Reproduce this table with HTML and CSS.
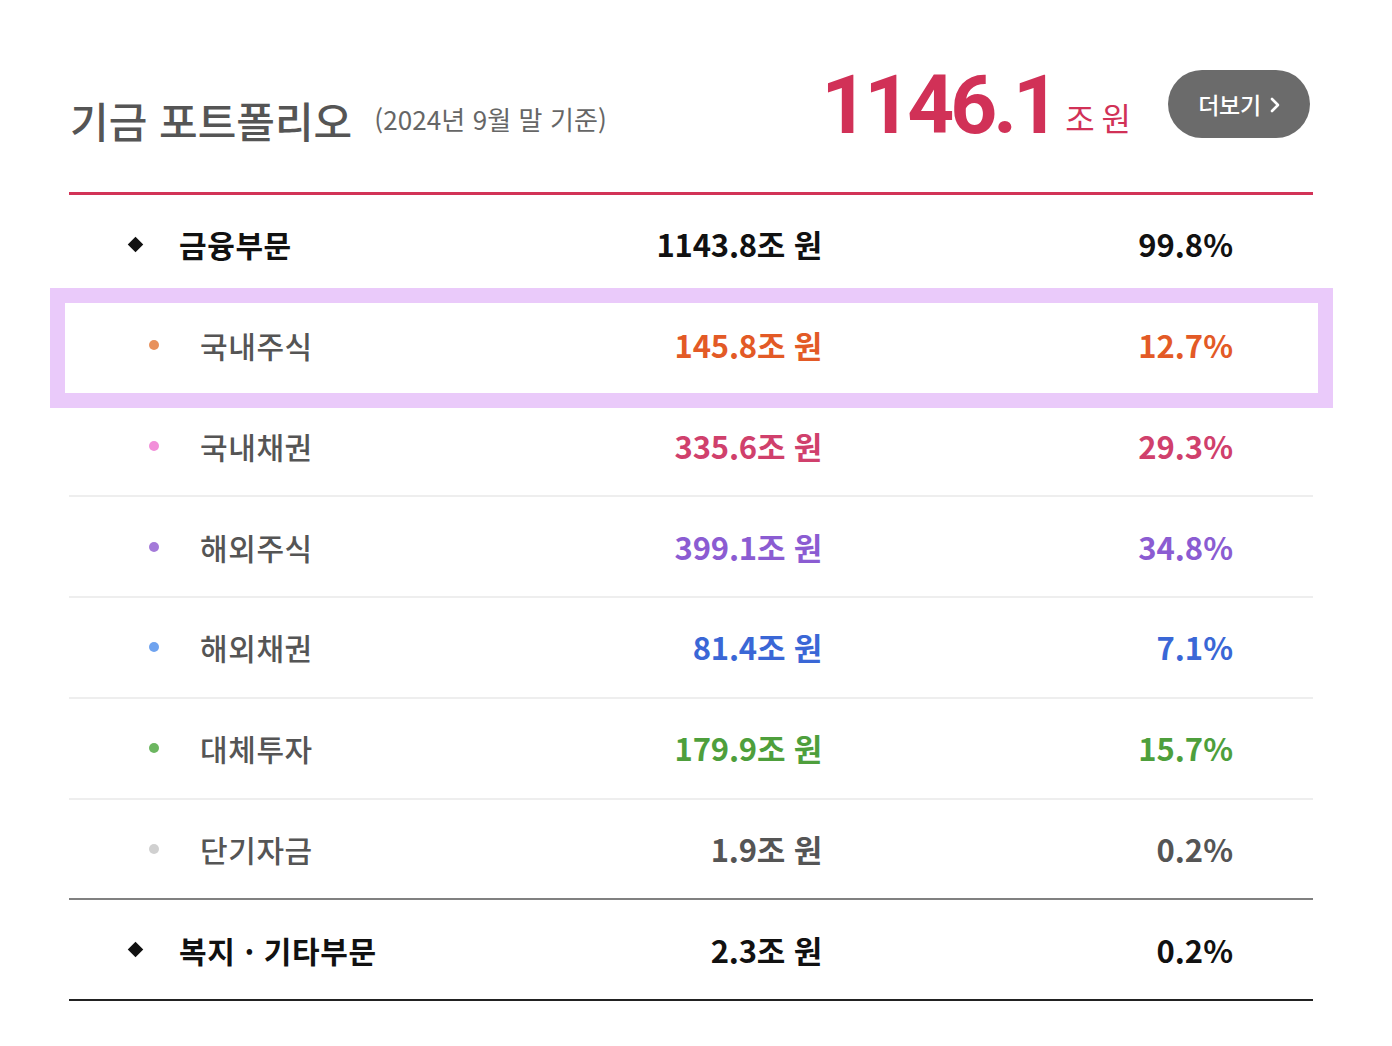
FILE: index.html
```html
<!DOCTYPE html>
<html lang="ko">
<head>
<meta charset="utf-8">
<title>기금 포트폴리오</title>
<link rel="stylesheet" href="styles.css">
</head>
<body>
<div class="page">
  <div class="header">
    <div class="title-group">
      <h2 class="title">기금 포트폴리오</h2>
      <span class="subtitle">(2024년 9월 말 기준)</span>
    </div>
    <div class="total-group">
      <div class="total">
        <span class="total-num">1146.1</span><span class="total-unit">조 원</span>
      </div>
      <a class="more-btn" href="#">더보기
        <svg class="chev" width="10" height="16" viewBox="0 0 10 16"><path d="M2 2 L8 8 L2 14" fill="none" stroke="#fff" stroke-width="2.6" stroke-linecap="round" stroke-linejoin="round"/></svg>
      </a>
    </div>
  </div>

  <div class="table">
    <div class="row main">
      <div class="name"><span class="diamond"></span><span class="label">금융부문</span></div>
      <div class="amount">1143.8조 원</div>
      <div class="pct">99.8%</div>
    </div>
    <div class="row sub c-orange highlighted">
      <div class="name"><span class="dot"></span><span class="label">국내주식</span></div>
      <div class="amount">145.8조 원</div>
      <div class="pct">12.7%</div>
    </div>
    <div class="row sub c-pink">
      <div class="name"><span class="dot"></span><span class="label">국내채권</span></div>
      <div class="amount">335.6조 원</div>
      <div class="pct">29.3%</div>
    </div>
    <div class="row sub c-purple">
      <div class="name"><span class="dot"></span><span class="label">해외주식</span></div>
      <div class="amount">399.1조 원</div>
      <div class="pct">34.8%</div>
    </div>
    <div class="row sub c-blue">
      <div class="name"><span class="dot"></span><span class="label">해외채권</span></div>
      <div class="amount">81.4조 원</div>
      <div class="pct">7.1%</div>
    </div>
    <div class="row sub c-green">
      <div class="name"><span class="dot"></span><span class="label">대체투자</span></div>
      <div class="amount">179.9조 원</div>
      <div class="pct">15.7%</div>
    </div>
    <div class="row sub c-gray last-sub">
      <div class="name"><span class="dot"></span><span class="label">단기자금</span></div>
      <div class="amount">1.9조 원</div>
      <div class="pct">0.2%</div>
    </div>
    <div class="row main final">
      <div class="name"><span class="diamond"></span><span class="label">복지 · 기타부문</span></div>
      <div class="amount">2.3조 원</div>
      <div class="pct">0.2%</div>
    </div>
  </div>
</div>
</body>
</html>
```

FILE: styles.css
```css
* { box-sizing: border-box; }

html, body {
  margin: 0;
  padding: 0;
  background: #fff;
}

body {
  font-family: "Noto Sans CJK KR", "Noto Sans", sans-serif;
  color: #111;
}

.page {
  width: 1244px;
  margin-left: 69px;
  padding-top: 60px;
}

/* ---------- header ---------- */
.header {
  height: 132px;
  display: flex;
  justify-content: space-between;
  align-items: flex-start;
}

.title-group {
  display: flex;
  align-items: center;
  margin-top: 39px;
}

.title {
  margin: 0;
  font-size: 42px;
  line-height: 42px;
  font-weight: 500;
  color: #555;
  letter-spacing: 0;
  margin-left: 1px;
}

.subtitle {
  margin-left: 22px;
  font-size: 26px;
  line-height: 30px;
  color: #666;
  letter-spacing: 0.1px;
  margin-top: -2px;
}

.total-group {
  display: flex;
  align-items: flex-start;
  margin-right: 3px;
}

.total {
  margin-top: 4px;
  display: flex;
  align-items: baseline;
}

.total-num {
  font-family: Roboto, "Liberation Sans", sans-serif;
  font-weight: 700;
  font-size: 82px;
  line-height: 82px;
  color: #d13157;
  letter-spacing: -4px;
}

.total-unit {
  margin-left: 9px;
  font-size: 32px;
  line-height: 32px;
  color: #d13157;
  letter-spacing: -1px;
  position: relative;
  top: -2px;
}

.more-btn {
  margin-top: 10px;
  margin-left: 38px;
  width: 142px;
  height: 68px;
  border-radius: 34px;
  background: #6b6b6b;
  color: #fff;
  text-decoration: none;
  font-size: 23px;
  font-weight: 500;
  letter-spacing: -0.3px;
  display: flex;
  align-items: center;
  justify-content: center;
  gap: 9px;
}

.chev { display: block; margin-top: 1px; }

/* ---------- table ---------- */
.table {
  border-top: 3px solid #d23357;
}

.row {
  position: relative;
  height: 100.75px;
  display: flex;
  align-items: center;
  border-bottom: 2px solid #eeeeee;
}

.row.last-sub { border-bottom-color: #808080; }
.row.final { border-bottom-color: #222; }

.name {
  width: 400px;
  display: flex;
  align-items: center;
}

.main .name { padding-left: 61px; }
.sub .name { padding-left: 80px; }

.diamond {
  width: 11px;
  height: 11px;
  background: #111;
  transform: rotate(45deg);
  flex: none;
}

.dot {
  width: 10px;
  height: 10px;
  border-radius: 50%;
  flex: none;
}

.label {
  font-size: 30px;
  line-height: 40px;
  letter-spacing: 0.6px;
}

.main .label {
  margin-left: 38px;
  font-weight: 700;
  color: #111;
}

.sub .label {
  margin-left: 41px;
  font-weight: 500;
  color: #555;
}

.amount {
  width: 353px;
  text-align: right;
  font-size: 31px;
  line-height: 40px;
  font-weight: 700;
  letter-spacing: -0.2px;
}

.pct {
  width: 411px;
  text-align: right;
  font-size: 31px;
  line-height: 40px;
  font-weight: 700;
  letter-spacing: 0;
}

.main .amount, .main .pct { color: #111; }

.c-orange .dot { background: #e8915c; }
.c-orange .amount, .c-orange .pct { color: #e35a26; }

.c-pink .dot { background: #f28fd9; }
.c-pink .amount, .c-pink .pct { color: #d0406c; }

.c-purple .dot { background: #a47ad9; }
.c-purple .amount, .c-purple .pct { color: #8b5cd2; }

.c-blue .dot { background: #6fa3ef; }
.c-blue .amount, .c-blue .pct { color: #3a67d6; }

.c-green .dot { background: #6cb660; }
.c-green .amount, .c-green .pct { color: #4e9f3c; }

.c-gray .dot { background: #d0d0d0; }
.c-gray .amount, .c-gray .pct { color: #555; }

/* selection highlight overlay */
.highlighted::after {
  content: "";
  position: absolute;
  left: -19px;
  right: -20px;
  top: -8px;
  bottom: -13px;
  border: 15px solid #eacafa;
  pointer-events: none;
}
```
